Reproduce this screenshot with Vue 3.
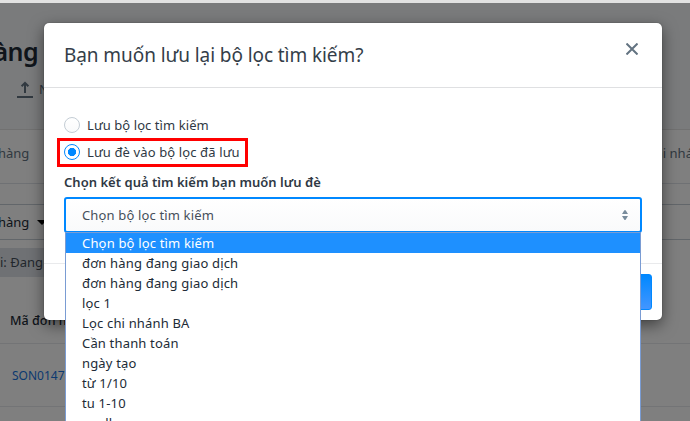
<script setup>
const options = [
  'Chọn bộ lọc tìm kiếm',
  'đơn hàng đang giao dịch',
  'đơn hàng đang giao dịch',
  'lọc 1',
  'Lọc chi nhánh BA',
  'Cần thanh toán',
  'ngày tạo',
  'từ 1/10',
  'tu 1-10',
  'quyllen',
]
</script>

<template>
  <div class="screen">
    <div class="page">
      <div class="topbar"></div>
      <header class="page-head">
        <h1>hàng</h1>
        <div class="import">
          <svg width="16" height="17" viewBox="0 0 16 17" fill="none" stroke="#637381" stroke-width="2">
            <path d="M8 12V2M4.6 5.2L8 1.8l3.4 3.4" />
            <path d="M0 16h16" />
          </svg>
          <span>Nhập file</span>
        </div>
      </header>
      <section class="card">
        <div class="tabs"><span>hàng</span><span class="tab-right">Chi nhánh</span></div>
        <div class="filter">
          <div class="filter-bar">
            <span>hàng</span>
            <svg width="10" height="5" viewBox="0 0 10 5"><path d="M0 0h10L5 5z" fill="#000" /></svg>
          </div>
          <div class="tag">i: Đang</div>
        </div>
        <div class="table-head">Mã đơn hàng</div>
        <div class="table-row">SON01475</div>
        <div class="table-row"></div>
      </section>
    </div>

    <div class="backdrop"></div>

    <div class="modal">
      <div class="modal-head">
        <h2>Bạn muốn lưu lại bộ lọc tìm kiếm?</h2>
        <svg class="close" width="12" height="12" viewBox="0 0 12 12" fill="none" stroke="#637381" stroke-width="2">
          <path d="M.5.5l11 11M11.5.5L.5 11.5" />
        </svg>
      </div>
      <div class="modal-body">
        <div class="choice">
          <i class="radio"></i><span>Lưu bộ lọc tìm kiếm</span>
        </div>
        <div class="choice marked">
          <i class="radio on"></i><span>Lưu đè vào bộ lọc đã lưu</span>
        </div>
        <div class="label">Chọn kết quả tìm kiếm bạn muốn lưu đè</div>
        <div class="select">
          <span>Chọn bộ lọc tìm kiếm</span>
          <svg width="6" height="10" viewBox="0 0 6 10" fill="#798c9c">
            <path d="M0 4L2.2.6Q3-.4 3.8.6L6 4zM0 6h6L3.8 9.4Q3 10.4 2.2 9.4z" />
          </svg>
        </div>
      </div>
      <div class="modal-foot"><div class="save"></div></div>
    </div>

    <div class="menu">
      <div v-for="(o, i) in options" :key="i" class="option" :class="{ active: i === 0 }">
        {{ o }}
      </div>
    </div>
  </div>
</template>

<style>
body {
  margin: 0;
  overflow: hidden;
}
</style>

<style scoped>
* {
  box-sizing: border-box;
}
.screen {
  position: relative;
  width: 690px;
  height: 421px;
  overflow: hidden;
  font-family: "Noto Sans", "Open Sans", sans-serif;
  font-size: 13px;
  line-height: 20px;
  color: #212b36;
  white-space: nowrap;
}
.page {
  background: #fff;
}
.topbar {
  height: 4px;
  background: #e2e2e2;
  border-bottom: 1px solid #f4f6f8;
}
.page-head {
  height: 125px;
  background: #f4f6f8;
  padding-top: 27px;
}
h1 {
  margin: 0 0 0 -22px;
  font-size: 25px;
  line-height: 40px;
  font-weight: 600;
  letter-spacing: -0.5px;
}
.import {
  display: flex;
  align-items: center;
  gap: 6px;
  height: 20px;
  margin: 8px 0 0 17px;
  color: #637381;
}
.card {
  border-top: 1px solid #e2e2e2;
}
.tabs {
  display: flex;
  justify-content: space-between;
  height: 54px;
  padding-top: 13px;
  border-bottom: 1px solid #dfe3e8;
  color: #637381;
}
.tabs span:first-child,
.filter-bar span {
  margin-left: -2px;
}
.tab-right {
  margin-right: -19px;
}
.filter {
  height: 116px;
  padding-top: 20px;
}
.filter-bar {
  display: flex;
  align-items: center;
  gap: 8px;
  height: 36px;
  border: 1px solid #c4cdd5;
  border-width: 1px 0;
}
.tag {
  width: 66px;
  height: 29px;
  margin-top: 8px;
  line-height: 29px;
  background: #dfe3e8;
  color: #454f5b;
}
.table-head {
  height: 44px;
  padding: 11px 0 0 10px;
  border-bottom: 1px solid #e6e9ec;
  font-size: 12.5px;
  font-weight: 500;
}
.table-row {
  height: 63px;
  padding: 22px 0 0 12px;
  border-bottom: 1px solid #e6e9ec;
  font-size: 12px;
  color: #1673e0;
}
.backdrop {
  position: absolute;
  inset: 3px 0 0;
  background: rgba(0, 0, 0, 0.5);
}
.modal {
  position: absolute;
  left: 44px;
  top: 23px;
  width: 618px;
  height: 297px;
  display: flex;
  flex-direction: column;
  border-radius: 5px;
  background: #fff;
  box-shadow: 0 0 1px rgba(0, 0, 0, 0.6), 0 5px 15px rgba(0, 0, 0, 0.5);
}
.modal-head {
  display: flex;
  justify-content: space-between;
  height: 65px;
  padding: 20px 24px 0 20px;
  border-bottom: 1px solid #dfe0e2;
}
h2 {
  margin: 0;
  font-size: 19px;
  line-height: 24px;
  font-weight: 400;
  letter-spacing: -0.08px;
  color: #343e49;
}
.modal-body {
  flex: 1;
  padding: 23px 20px 0;
}
.choice {
  display: flex;
  align-items: center;
  gap: 7px;
  height: 27px;
  letter-spacing: 0.07px;
  color: #2f3944;
}
.marked {
  width: 191px;
  height: 29px;
  margin-left: -7px;
  padding: 0 0 2px 4px;
  border: 3px solid #f00;
  letter-spacing: 0.12px;
}
.radio {
  width: 16px;
  height: 16px;
  flex: none;
  border: 1px solid #c4cdd5;
  border-radius: 50%;
  background: linear-gradient(#fff, #f9fafb);
}
.radio.on {
  border-color: #0088ff;
  background: radial-gradient(circle, #0088ff 3.8px, #fff 4.4px);
}
.label {
  margin-top: 5px;
  font-weight: 600;
  letter-spacing: 0.03px;
  color: #2f3944;
}
.select {
  display: flex;
  align-items: center;
  justify-content: space-between;
  width: 578px;
  height: 36px;
  margin-top: 5px;
  padding: 0 12px 1px 16px;
  border: 2px solid #0088ff;
  border-radius: 3px;
  background: linear-gradient(#fff, #f9fafb);
  color: #454f5b;
  letter-spacing: 0.15px;
}
.modal-foot {
  display: flex;
  justify-content: flex-end;
  height: 57px;
  padding: 10px 10px 0;
  border-top: 1px solid #e9eaec;
}
.save {
  width: 70px;
  height: 36px;
  border: 1px solid #0088ff;
  border-radius: 3px;
  background: linear-gradient(#0088ff, #4396ff);
}
.menu {
  position: absolute;
  left: 65px;
  top: 232px;
  width: 576px;
  height: 200px;
  overflow: hidden;
  border: 1px solid #7a9cd3;
  background: #fff;
}
.option {
  height: 20px;
  padding-left: 16px;
  letter-spacing: 0.17px;
}
.option.active {
  background: #1e90ff;
  color: #fff;
}
</style>
